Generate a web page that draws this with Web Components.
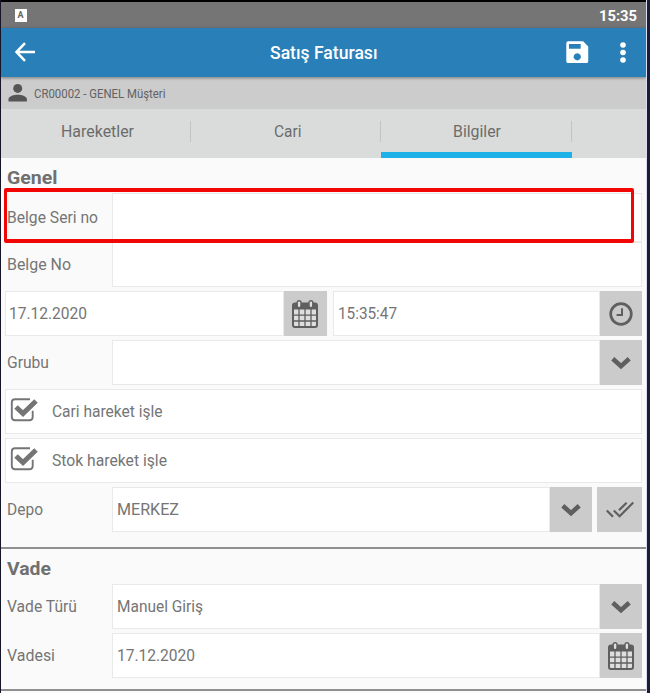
<!DOCTYPE html>
<html lang="tr"><head><meta charset="utf-8"><title>Satış Faturası</title>
<style>
html,body{margin:0;height:100%;overflow:hidden}
body{font-family:Roboto,"Liberation Sans",sans-serif;color:#757575;background:#1b1b3c}
</style></head><body>
<invoice-screen></invoice-screen>
<script>
const define=(name,html,ready)=>customElements.define(name,class extends HTMLElement{
  constructor(){super();this.attachShadow({mode:'open'})}
  connectedCallback(){this.shadowRoot.innerHTML=html;if(ready)ready(this,this.shadowRoot)}
});

// Single line of text, condensed or widened to the width in its "w" attribute.
define('fit-text',`<style>:host{display:block;white-space:nowrap;line-height:20px;flex:none}
span{display:inline-block;transform-origin:0 50%}</style><span><slot></slot></span>`,(el,r)=>{
  const w=+el.getAttribute('w'),s=r.querySelector('span');
  el.style.width=w+'px';
  s.style.transform='scaleX('+w/s.getBoundingClientRect().width+')';
});

const icons={
 back:[20,20,'<path d="M10 1.2 1.6 10 10 18.8M2 10H20" fill="none" stroke="currentColor" stroke-width="2.5"/>'],
 save:[23,23,'<path fill-rule="evenodd" fill="currentColor" d="M2.5.3H17.5L22.7 5.5V20.5Q22.7 22.7 20.5 22.7H2.5Q.3 22.7.3 20.5V2.5Q.3.3 2.5.3ZM3 3V8H15V3ZM11.5 12.4a3.7 3.7 0 1 0 .01 0Z"/>'],
 dots:[6,21,'<g fill="currentColor"><circle cx="3" cy="3" r="2.8"/><circle cx="3" cy="10.5" r="2.8"/><circle cx="3" cy="18" r="2.8"/></g>'],
 person:[20,18,'<g fill="currentColor"><circle cx="10" cy="4.6" r="4.6"/><path d="M.5 18V15.5C.5 12.4 6.5 11 10 11S19.5 12.4 19.5 15.5V18Z"/></g>'],
 calendar:[28,30,'<path d="M2 6.5Q2 4.5 4 4.5H24Q26 4.5 26 6.5V26Q26 28 24 28H4Q2 28 2 26Z" fill="#dedede" stroke="currentColor" stroke-width="2"/><path d="M2 5H26V10.5H2Z" fill="currentColor"/><path d="M8 10V27M14 10V27M20 10V27M3 16.2H25M3 22H25" stroke="currentColor" stroke-width="1.3"/><rect x="6.2" y="1.7" width="3.8" height="7" rx="1.9" fill="#ddd" stroke="currentColor" stroke-width="1.4"/><rect x="18" y="1.7" width="3.8" height="7" rx="1.9" fill="#ddd" stroke="currentColor" stroke-width="1.4"/>'],
 clock:[24,24,'<circle cx="12" cy="12" r="10.3" fill="none" stroke="currentColor" stroke-width="2.7"/><path d="M13 6.2V13H7.6" fill="none" stroke="currentColor" stroke-width="2"/>'],
 chevron:[20,14,'<path d="M1.8 2.8 10 10.2 18.2 2.8" fill="none" stroke="currentColor" stroke-width="4.6"/>'],
 double:[28,18,'<g fill="none" stroke="currentColor" stroke-width="2.2"><path d="M.8 9.5 7 15.7M7.8 9.5 13.6 15.2 27.3 1.5M13 9.3 20.6 1.7"/></g>'],
 check:[28,25,'<path d="M20 2.2H5Q1.8 2.2 1.8 5.4V20Q1.8 23.2 5 23.2H19.5Q22.7 23.2 22.7 20V13.8" fill="none" stroke="currentColor" stroke-width="1.9"/><path d="M6 10 13 16.6 26 4" fill="none" stroke="currentColor" stroke-width="5"/>']
};
define('ui-icon','<style>:host{display:block;flex:none}svg{display:block}</style><svg></svg>',(el,r)=>{
  const [w,h,p]=icons[el.getAttribute('name')],k=+(el.getAttribute('scale')||1);
  r.innerHTML=r.innerHTML.replace('<svg></svg>',`<svg width="${w*k}" height="${h*k}" viewBox="0 0 ${w} ${h}">${p}</svg>`);
});

define('status-bar',`<style>:host{display:flex;box-sizing:border-box;height:28px;border-top:2.5px solid #000;background:#757575;align-items:center;justify-content:space-between;padding:0 9.5px 0 13.5px;color:#fff}
b{width:12px;height:13px;margin-top:1px;background:#fff;color:#666;font:bold 9px/13px Roboto,sans-serif;text-align:center}
fit-text{font-size:15px;font-weight:700;margin-top:2px}</style><b>A</b><fit-text w="38">15:35</fit-text>`);

define('app-bar',`<style>:host{display:grid;grid-template-columns:269px 1fr auto auto;align-items:center;height:49px;box-sizing:border-box;background:#2980b9;color:#fff;padding:0 20px 0 0;position:relative;box-shadow:0 1px 3px #0006}
.b{margin-left:14px;margin-top:-1px}.d{margin-left:31px;margin-top:-1px}.s{margin-top:-1px}
fit-text{font-size:18px;font-weight:500}</style><ui-icon class="b" name="back"></ui-icon><fit-text w="107.5">Satış Faturası</fit-text><ui-icon class="s" name="save" scale=".98"></ui-icon><ui-icon class="d" name="dots"></ui-icon>`);

define('customer-bar',`<style>:host{display:flex;align-items:center;height:32px;background:#ccc;padding-left:7px;gap:7px;color:#555}
fit-text{font-size:12.5px;color:#626262;margin-top:1px}</style><ui-icon name="person" scale=".97"></ui-icon><fit-text w="131.5">CR00002 - GENEL Müşteri</fit-text>`);

define('nav-tab',`<style>:host{display:flex;box-sizing:border-box;justify-content:center;align-items:center;width:190.2px;height:49px;border-bottom:6px solid transparent;position:relative;font-size:17px;color:#6c6c6c;padding-left:2px}
:host([on]){border-color:#1eb1e8}i{position:absolute;right:0;top:12px;width:1px;height:21px;background:#c2c4c3}::slotted(*){transform:translateY(-.5px)}</style><slot></slot><i></i>`);
define('tab-strip','<style>:host{display:flex;background:#dadcdb;height:49px}</style><slot></slot>');

define('form-section',`<style>:host{display:flex;flex-direction:column;box-sizing:border-box;padding:0 4px;border-bottom:2px solid #909090;gap:4px}
h2{margin:0 0 0 2px;font-size:19px;font-weight:700;height:31px;display:flex;align-items:center;padding-top:8px;box-sizing:border-box;color:#707070}</style><h2><slot name="title"></slot></h2><slot></slot>`);

define('form-row',`<style>:host{display:flex;height:45px;box-sizing:border-box;font-size:16.5px}
.l{width:107px;flex:none;display:flex;align-items:center;padding:1px 0 0 2px;box-sizing:border-box}:host(:not([labelled])) .l{display:none}
</style><div class="l"><slot name="label"></slot></div><slot></slot>`);
define('text-box',`<style>:host{display:flex;flex:1;align-items:center;box-sizing:border-box;background:#fff;border:1px solid #e9e9e9;padding-left:4px;min-width:0;gap:14px}</style><slot></slot>`);
define('icon-button',`<style>:host{display:flex;width:42.5px;flex:none;background:#cbcbcb;color:#5f5f5f;align-items:center;justify-content:center}</style><slot></slot>`);
define('focus-frame',`<style>:host{position:absolute;left:3px;top:188px;width:630px;height:55px;border:4px solid #f20505;border-width:4px 3.5px;border-radius:2px;box-sizing:border-box}</style>`);

define('invoice-screen',`<style>:host{display:block;position:relative;box-sizing:border-box;width:647px;height:693px;border-left:1.5px solid #15152a;border-right:1px solid #dde;background:#fafafa;overflow:hidden}
.tall{height:49px}.after-tall{margin-top:-4px}.gap{margin-left:5px}.first{padding-bottom:15px}.second{padding-bottom:11px}
.option{padding-left:4px}.option ui-icon{margin-top:-4px}
.date{padding-left:3px}.time{margin-left:6px;flex:0 0 267px}
</style>
<status-bar></status-bar><app-bar></app-bar><customer-bar></customer-bar>
<tab-strip><nav-tab><fit-text w="73">Hareketler</fit-text></nav-tab><nav-tab><fit-text w="27.5">Cari</fit-text></nav-tab><nav-tab on><fit-text w="48">Bilgiler</fit-text></nav-tab></tab-strip>
<form-section class="first"><fit-text slot="title" w="50.5">Genel</fit-text>
<form-row labelled class="tall"><fit-text slot="label" w="91">Belge Seri no</fit-text><text-box></text-box></form-row>
<form-row labelled class="after-tall"><fit-text slot="label" w="64">Belge No</fit-text><text-box></text-box></form-row>
<form-row><text-box class="date"><fit-text w="78">17.12.2020</fit-text></text-box><icon-button><ui-icon name="calendar"></ui-icon></icon-button><text-box class="time"><fit-text w="59">15:35:47</fit-text></text-box><icon-button><ui-icon name="clock"></ui-icon></icon-button></form-row>
<form-row labelled><fit-text slot="label" w="42">Grubu</fit-text><text-box></text-box><icon-button><ui-icon name="chevron"></ui-icon></icon-button></form-row>
<form-row><text-box class="option"><ui-icon name="check"></ui-icon><fit-text w="110.5">Cari hareket işle</fit-text></text-box></form-row>
<form-row><text-box class="option"><ui-icon name="check"></ui-icon><fit-text w="115">Stok hareket işle</fit-text></text-box></form-row>
<form-row labelled><fit-text slot="label" w="36">Depo</fit-text><text-box><fit-text w="62">MERKEZ</fit-text></text-box><icon-button><ui-icon name="chevron"></ui-icon></icon-button><icon-button class="gap" style="width:45px"><ui-icon name="double"></ui-icon></icon-button></form-row>
</form-section>
<form-section class="second"><fit-text slot="title" w="44">Vade</fit-text>
<form-row labelled><fit-text slot="label" w="70">Vade Türü</fit-text><text-box><fit-text w="86">Manuel Giriş</fit-text></text-box><icon-button><ui-icon name="chevron"></ui-icon></icon-button></form-row>
<form-row labelled><fit-text slot="label" w="48">Vadesi</fit-text><text-box><fit-text w="78">17.12.2020</fit-text></text-box><icon-button><ui-icon name="calendar"></ui-icon></icon-button></form-row>
</form-section>
<focus-frame></focus-frame>`);
</script></body></html>
